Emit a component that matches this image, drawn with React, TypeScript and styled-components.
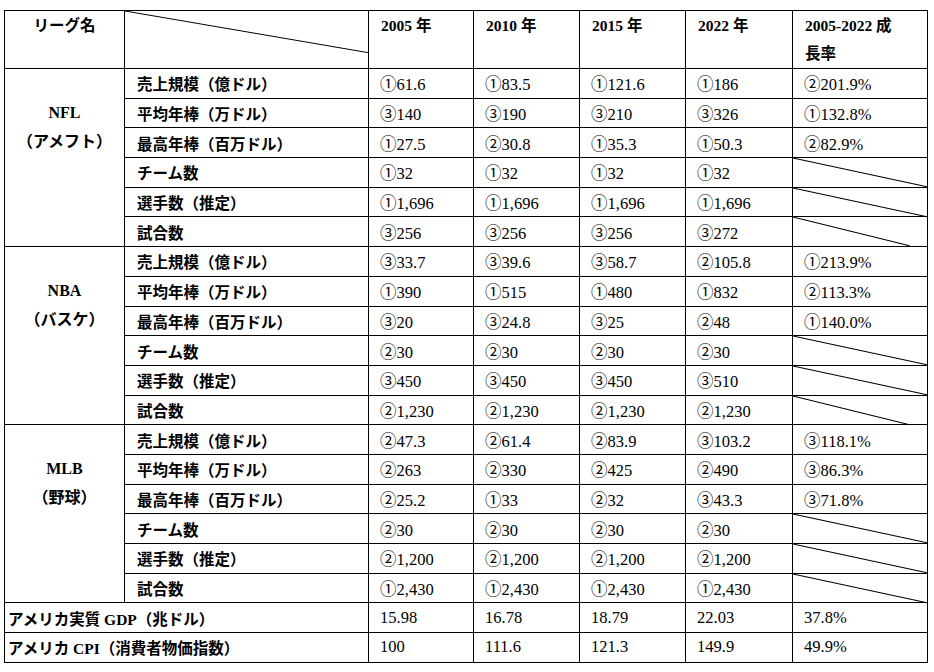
import React from "react";
import styled, { createGlobalStyle } from "styled-components";

const GlobalStyle = createGlobalStyle`
  html, body {
    margin: 0;
    padding: 0;
    background: #fff;
  }
  body {
    font-family: "Liberation Serif", "Noto Sans CJK JP", serif;
    color: #000;
  }
`;

type Row = { item: string; values: string[]; growth?: string; slashEnd?: number };
type League = { name: string; sub: string; rows: Row[] };

const leagues: League[] = [
  {
    name: "NFL",
    sub: "（アメフト）",
    rows: [
      { item: "売上規模（億ドル）", values: ["①61.6", "①83.5", "①121.6", "①186"], growth: "②201.9%" },
      { item: "平均年棒（万ドル）", values: ["③140", "③190", "③210", "③326"], growth: "①132.8%" },
      { item: "最高年棒（百万ドル）", values: ["①27.5", "②30.8", "①35.3", "①50.3"], growth: "②82.9%" },
      { item: "チーム数", values: ["①32", "①32", "①32", "①32"] },
      { item: "選手数（推定）", values: ["①1,696", "①1,696", "①1,696", "①1,696"] },
      { item: "試合数", values: ["③256", "③256", "③256", "③272"], slashEnd: 87 },
    ],
  },
  {
    name: "NBA",
    sub: "（バスケ）",
    rows: [
      { item: "売上規模（億ドル）", values: ["③33.7", "③39.6", "③58.7", "②105.8"], growth: "①213.9%" },
      { item: "平均年棒（万ドル）", values: ["①390", "①515", "①480", "①832"], growth: "②113.3%" },
      { item: "最高年棒（百万ドル）", values: ["③20", "③24.8", "③25", "②48"], growth: "①140.0%" },
      { item: "チーム数", values: ["②30", "②30", "②30", "②30"] },
      { item: "選手数（推定）", values: ["③450", "③450", "③450", "③510"] },
      { item: "試合数", values: ["②1,230", "②1,230", "②1,230", "②1,230"], slashEnd: 87 },
    ],
  },
  {
    name: "MLB",
    sub: "（野球）",
    rows: [
      { item: "売上規模（億ドル）", values: ["②47.3", "②61.4", "②83.9", "③103.2"], growth: "③118.1%" },
      { item: "平均年棒（万ドル）", values: ["②263", "②330", "②425", "②490"], growth: "③86.3%" },
      { item: "最高年棒（百万ドル）", values: ["②25.2", "①33", "②32", "③43.3"], growth: "③71.8%" },
      { item: "チーム数", values: ["②30", "②30", "②30", "②30"] },
      { item: "選手数（推定）", values: ["②1,200", "②1,200", "②1,200", "②1,200"] },
      { item: "試合数", values: ["①2,430", "①2,430", "①2,430", "①2,430"] },
    ],
  },
];

const footers = [
  { label: "アメリカ実質 GDP（兆ドル）", values: ["15.98", "16.78", "18.79", "22.03", "37.8%"] },
  { label: "アメリカ CPI（消費者物価指数）", values: ["100", "111.6", "121.3", "149.9", "49.9%"] },
];

const colWidths = [120, 244, 105, 106, 106, 107, 135];

const Slash = ({ endX = 100, endY = 100 }: { endX?: number; endY?: number }) => (
  <SlashSvg viewBox="0 0 100 100" preserveAspectRatio="none">
    <line x1="0" y1="0" x2={endX} y2={endY} stroke="#000" strokeWidth="1" vectorEffect="non-scaling-stroke" />
  </SlashSvg>
);

export default function App() {
  return (
    <Page>
      <GlobalStyle />
      <Table>
        <colgroup>
          {colWidths.map((w, i) => (
            <col key={i} style={{ width: w }} />
          ))}
        </colgroup>
        <thead>
          <HeadRow>
            <HeadCell $center>リーグ名</HeadCell>
            <HeadCell>
              <Slash endY={73} />
            </HeadCell>
            <HeadCell>2005 年</HeadCell>
            <HeadCell>2010 年</HeadCell>
            <HeadCell>2015 年</HeadCell>
            <HeadCell>2022 年</HeadCell>
            <HeadCell>
              2005-2022 成<br />長率
            </HeadCell>
          </HeadRow>
        </thead>
        <tbody>
          {leagues.map((lg) =>
            lg.rows.map((r, i) => (
              <BodyRow key={lg.name + i}>
                {i === 0 && (
                  <LeagueCell rowSpan={lg.rows.length}>
                    {lg.name}
                    <br />
                    {lg.sub}
                  </LeagueCell>
                )}
                <ItemCell>{r.item}</ItemCell>
                {r.values.map((v, j) => (
                  <ValueCell key={j}>{v}</ValueCell>
                ))}
                {r.growth ? (
                  <ValueCell>{r.growth}</ValueCell>
                ) : (
                  <SlashCell>
                    <Slash endX={r.slashEnd ?? 100} />
                  </SlashCell>
                )}
              </BodyRow>
            ))
          )}
          {footers.map((f) => (
            <BodyRow key={f.label}>
              <FooterLabel colSpan={2}>{f.label}</FooterLabel>
              {f.values.map((v, j) => (
                <ValueCell key={j}>{v}</ValueCell>
              ))}
            </BodyRow>
          ))}
        </tbody>
      </Table>
    </Page>
  );
}

const Page = styled.div`
  padding: 10px 0 0 4px;
`;

const Table = styled.table`
  border-collapse: collapse;
  table-layout: fixed;
  width: 923px;
  font-size: 15.5px;
`;

const HeadRow = styled.tr`
  height: 57px;
`;

const BodyRow = styled.tr`
  height: 29.7px;
`;

const BaseCell = styled.td`
  border: 1px solid #000;
  padding: 0 4px 0 12px;
  vertical-align: middle;
  white-space: nowrap;
  position: relative;
`;

const HeadCell = styled.th<{ $center?: boolean }>`
  border: 1px solid #000;
  padding: 1px 4px 0 ${(p) => (p.$center ? "4px" : "12px")};
  text-align: ${(p) => (p.$center ? "center" : "left")};
  vertical-align: top;
  font-weight: bold;
  line-height: 28px;
  position: relative;
`;

const LeagueCell = styled(BaseCell)`
  padding: 29px 0 0 0;
  vertical-align: top;
  text-align: center;
  font-weight: bold;
  font-size: 16px;
  line-height: 29px;
`;

const ItemCell = styled(BaseCell)`
  font-weight: bold;
`;

const ValueCell = styled(BaseCell)`
  font-size: 16.5px;
  padding-left: 11px;
`;

const SlashCell = styled(BaseCell)`
  padding: 0;
`;

const FooterLabel = styled(BaseCell)`
  padding-left: 3px;
  font-weight: bold;
`;

const SlashSvg = styled.svg`
  position: absolute;
  inset: 0;
  width: 100%;
  height: 100%;
  overflow: visible;
`;
